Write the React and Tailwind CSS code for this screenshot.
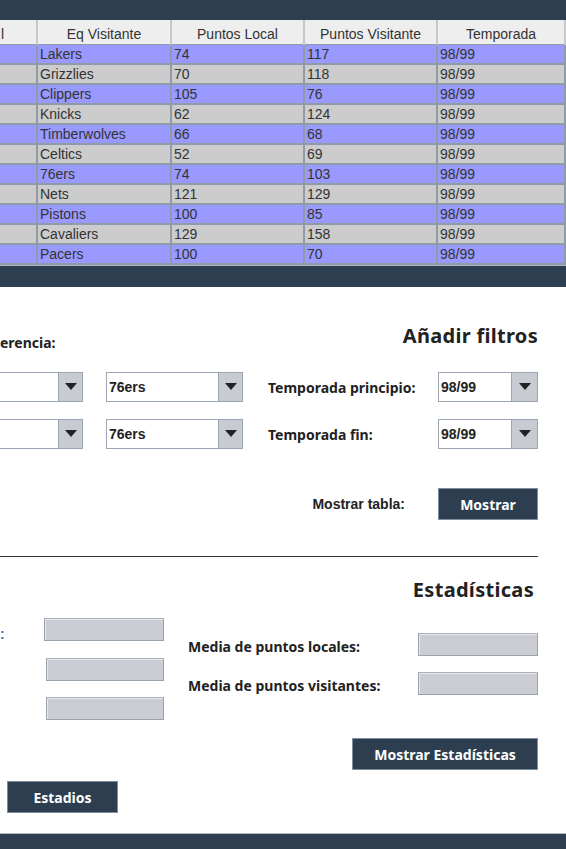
import React from "react";

const ROWS = [
  ["Lakers", "74", "117", "98/99"],
  ["Grizzlies", "70", "118", "98/99"],
  ["Clippers", "105", "76", "98/99"],
  ["Knicks", "62", "124", "98/99"],
  ["Timberwolves", "66", "68", "98/99"],
  ["Celtics", "52", "69", "98/99"],
  ["76ers", "74", "103", "98/99"],
  ["Nets", "121", "129", "98/99"],
  ["Pistons", "100", "85", "98/99"],
  ["Cavaliers", "129", "158", "98/99"],
  ["Pacers", "100", "70", "98/99"],
];

const HEADERS = ["l", "Eq Visitante", "Puntos Local", "Puntos Visitante", "Temporada"];

const cols = "grid grid-cols-[38px_134px_133px_133px_128px]";
const noto = "[font-family:'Noto_Sans',sans-serif]";

function Combo({ value, fieldW, arrowW, cut }) {
  return (
    <div className={`flex h-[30px] ${cut ? "-ml-[2px]" : ""}`}>
      <div
        className="h-full border border-[#9aa6b2] bg-white flex items-center pl-[2px] text-[14px] font-bold text-[#222]"
        style={{ width: fieldW }}
      >
        {value}
      </div>
      <div
        className="h-full bg-[#c9cbd3] border border-l-0 border-[#9aa6b2] flex items-center justify-center"
        style={{ width: arrowW }}
      >
        <svg width="12" height="8" viewBox="0 0 12 8">
          <path d="M0 0 L12 0 L6 7 Z" fill="#222" />
        </svg>
      </div>
    </div>
  );
}

function Field({ className = "" }) {
  return (
    <div
      className={`h-[23px] bg-[#cbccd4] border border-[#98a2ac] border-t-[#a8b0b8] shadow-[inset_1px_1px_0_#e8e8ec] ${className}`}
    />
  );
}

function DarkButton({ children, className = "" }) {
  return (
    <button
      className={`h-[32px] bg-[#2c3e50] border border-[#7f8e9c] text-white text-[14px] font-bold ${noto} flex items-center justify-center ${className}`}
    >
      {children}
    </button>
  );
}

export default function App() {
  return (
    <div className="w-[566px] h-[849px] overflow-hidden bg-white [font-family:'Liberation_Sans',Arial,sans-serif] flex flex-col">
      <div className="h-[20px] bg-[#2c3e50] shrink-0" />

      <div className="h-[245px] overflow-hidden shrink-0">
        <div className={`${cols} h-[25px] bg-[#eeeeee] border-b border-[#8f9ba6]`}>
          {HEADERS.map((h, i) => (
            <div
              key={h}
              className={`flex items-center pt-[4px] text-[14px] text-[#333] border-r-2 border-[#c4c9ce] ${
                i === 0 ? "justify-start pl-[1px]" : "justify-center"
              }`}
            >
              {h}
            </div>
          ))}
        </div>
        {ROWS.map((row, r) => (
          <div
            key={row[0]}
            className={`${cols} h-[20px] border-b-2 border-[#8f9ba6] ${
              r % 2 === 0 ? "bg-[#9999ff]" : "bg-[#cccccc]"
            }`}
          >
            <div className="border-r-2 border-[#8f9ba6]" />
            {row.map((c, i) => (
              <div
                key={i}
                className="border-r-2 border-[#8f9ba6] text-[14px] leading-[18px] text-[#333] pl-[2px] overflow-hidden whitespace-nowrap"
              >
                {c}
              </div>
            ))}
          </div>
        ))}
      </div>

      <div className="h-[22px] bg-[#2c3e50] border-t border-[#aab4bd] shrink-0" />

      <div className="pr-[28px] flex flex-col">
        <div className="flex justify-between items-center mt-[36px] h-[26px]">
          <span className={`text-[14px] font-bold text-[#222] mt-[12px] ${noto}`}>erencia:</span>
          <span className={`text-[20px] font-bold text-[#222] ${noto} tracking-[0.3px]`}>
            Añadir filtros
          </span>
        </div>

        {["Temporada principio:", "Temporada fin:"].map((label, i) => (
          <div key={label} className={`flex items-center ${i === 0 ? "mt-[23px]" : "mt-[17px]"}`}>
            <Combo value="" fieldW={61} arrowW={24} cut />
            <div className="ml-[23px]">
              <Combo value="76ers" fieldW={113} arrowW={24} />
            </div>
            <span className={`ml-[25px] w-[170px] text-[14px] font-bold text-[#222] ${noto}`}>
              {label}
            </span>
            <Combo value="98/99" fieldW={74} arrowW={26} />
          </div>
        ))}

        <div className="flex items-center justify-end mt-[39px]">
          <span className="text-[14px] font-bold text-[#222] mr-[33px]">Mostrar tabla:</span>
          <DarkButton className="w-[100px]">Mostrar</DarkButton>
        </div>

        <div className="h-[1px] bg-[#333] mt-[36px]" />

        <div className="flex justify-end mt-[18px] pr-[4px]">
          <span className={`text-[20px] font-bold text-[#222] ${noto} tracking-[0.3px]`}>
            Estadísticas
          </span>
        </div>

        <div className="flex mt-[13px]">
          <div className="w-[164px] flex flex-col">
            <div className="flex items-start h-[23px]">
              <span className="text-[14px] font-bold text-[#3a6fc4] h-[23px] leading-[23px] pt-[5px] w-[44px]">:</span>
              <Field className="w-[120px]" />
            </div>
            <Field className="w-[118px] ml-[46px] mt-[17px]" />
            <Field className="w-[118px] ml-[46px] mt-[16px]" />
          </div>
          <div className="flex-1 flex flex-col ml-[24px] mt-[15px]">
            <div className="flex items-end justify-between h-[23px]">
              <span className={`text-[14px] leading-[18px] font-bold text-[#222] ${noto}`}>
                Media de puntos locales:
              </span>
              <Field className="w-[120px]" />
            </div>
            <div className="flex items-end justify-between h-[23px] mt-[16px]">
              <span className={`text-[14px] leading-[18px] font-bold text-[#222] ${noto}`}>
                Media de puntos visitantes:
              </span>
              <Field className="w-[120px]" />
            </div>
          </div>
        </div>

        <div className="flex justify-end mt-[18px]">
          <DarkButton className="w-[186px]">Mostrar Estadísticas</DarkButton>
        </div>

        <div className="flex mt-[11px] ml-[7px]">
          <DarkButton className="w-[111px]">Estadios</DarkButton>
        </div>
      </div>

      <div className="mt-[20px] h-[16px] bg-[#2c3e50] border-t border-[#b5bcc3] shrink-0" />
      <div className="flex-1 bg-[#d8d8d8]" />
    </div>
  );
}
